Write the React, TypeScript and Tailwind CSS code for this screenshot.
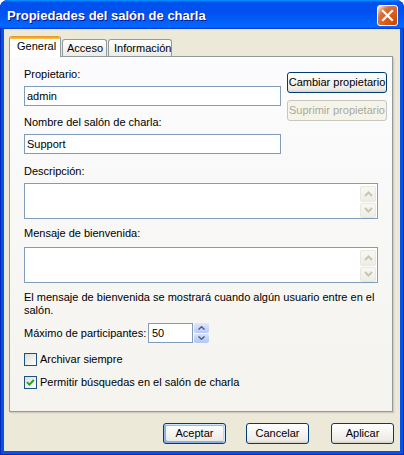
import React from "react";

const btnBase =
  "h-[21px] rounded-[3px] border flex items-center justify-center text-[11px] leading-[13px]";
const btnNormal =
  "border-[#003C74] bg-[linear-gradient(180deg,#ffffff,#ecebe5_86%,#d8d0c4)] text-black";
const btnDefault =
  "shadow-[inset_-1px_1px_#cee7ff,inset_1px_2px_#98b8ea,inset_-2px_2px_#bcd4f6,inset_1px_-1px_#89ade4,inset_2px_-2px_#89ade4]";
const btnDisabled = "border-[#C9C7BA] bg-[#F5F4EA] text-[#ACA899]";

function ScrollArrow({ up }: { up: boolean }) {
  return (
    <div className="w-[16px] h-[16px] rounded-[2px] border border-[#E9E7DD] bg-[linear-gradient(180deg,#f8f7f2,#eeede5)] flex items-center justify-center">
      <svg width="9" height="6" viewBox="0 0 9 6">
        <polyline
          points={up ? "1,5 4.5,1.5 8,5" : "1,1 4.5,4.5 8,1"}
          fill="none"
          stroke="#C9C5B5"
          strokeWidth="2"
        />
      </svg>
    </div>
  );
}

function TextArea() {
  return (
    <div className="mt-[5px] h-[36px] w-[354px] border border-[#7F9DB9] bg-white flex justify-end">
      <div className="flex flex-col gap-[1px] pt-[2px] pr-[1px]">
        <ScrollArrow up />
        <ScrollArrow up={false} />
      </div>
    </div>
  );
}

function Checkbox({ checked }: { checked: boolean }) {
  return (
    <div className="w-[13px] h-[13px] border border-[#1C5180] bg-[linear-gradient(135deg,#dcdcd7,#ffffff)] flex items-center justify-center">
      {checked && (
        <svg width="9" height="9" viewBox="0 0 9 9">
          <polyline
            points="1,4.2 3.4,6.6 7.8,2"
            fill="none"
            stroke="#21A121"
            strokeWidth="1.9"
          />
        </svg>
      )}
    </div>
  );
}

export default function App() {
  return (
    <div className="w-[404px] h-[455px] flex flex-col rounded-t-[8px] overflow-hidden bg-[#0553E6] shadow-[inset_1px_0_#0029B8,inset_-1px_0_#0029B8,inset_0_-1px_#0029B8] font-['Liberation_Sans',Arial,sans-serif] text-[11px] text-black">
      {/* Title bar */}
      <div className="h-[29px] shrink-0 flex items-center pl-[7px] pr-[6px] rounded-t-[8px] bg-[linear-gradient(180deg,#0997ff,#0053ee_8%,#0050ee_40%,#0066ff_88%,#0066ff_93%,#005bff_95%,#003dd7_96%,#003dd7)]">
        <span className="mt-[2px] text-white font-bold text-[13px] leading-[16px] [text-shadow:1px_1px_0_#0f1089]">
          Propiedades del salón de charla
        </span>
        <div className="ml-auto mt-[2px] w-[21px] h-[21px] rounded-[3px] border border-white bg-[radial-gradient(circle_at_90%_90%,#cc4600_0%,#dc6527_55%,#cd7546_70%,#ffccb2_90%,#ffffff_100%)] flex items-center justify-center">
          <svg width="13" height="13" viewBox="0 0 13 13">
            <path d="M2 2 L11 11 M11 2 L2 11" stroke="#ffffff" strokeWidth="2.2" strokeLinecap="square" />
          </svg>
        </div>
      </div>

      {/* Client area */}
      <div className="mx-[4px] mb-[4px] flex-1 bg-[#ECE9D8] pt-[7px] pl-[5px] pr-[6px] flex flex-col">
        {/* Tabs */}
        <div className="flex items-end h-[20px] relative z-10">
          <div className="w-[52px] h-[21px] -mb-px bg-white border-x border-[#919B9C] rounded-t-[3px] flex flex-col overflow-hidden">
            <div className="h-[3px] shrink-0 bg-[linear-gradient(180deg,#E68B2C,#FFC73C)]" />
            <div className="pl-[7px] pt-[1px] leading-[13px]">General</div>
          </div>
          <div className="ml-[1px] w-[45px] h-[17px] border border-b-0 border-[#919B9C] rounded-t-[3px] bg-[linear-gradient(180deg,#ffffff,#ecebe6)] pl-[4px] pt-[2px] leading-[13px]">
            Acceso
          </div>
          <div className="ml-[1px] w-[64px] h-[17px] border border-b-0 border-[#919B9C] rounded-t-[3px] bg-[linear-gradient(180deg,#ffffff,#ecebe6)] pl-[5px] pt-[2px] leading-[13px]">
            Información
          </div>
        </div>

        {/* Panel */}
        <div className="h-[356px] w-[384px] shrink-0 border border-[#919B9C] bg-[linear-gradient(180deg,#fcfcfe,#f4f3ee)] shadow-[1px_1px_0_#d0cebf,2px_2px_0_#e3e0d0] pt-[11px] pl-[14px] flex flex-col">
          <div className="flex">
            <div className="w-[257px] flex flex-col">
              <div className="leading-[13px]">Propietario:</div>
              <div className="mt-[5px] h-[20px] border border-[#7F9DB9] bg-white pl-[2px] flex items-center leading-[13px]">
                admin
              </div>
              <div className="mt-[10px] leading-[13px]">Nombre del salón de charla:</div>
              <div className="mt-[5px] h-[20px] border border-[#7F9DB9] bg-white pl-[2px] flex items-center leading-[13px]">
                Support
              </div>
            </div>
            <div className="ml-[6px] mt-[4px] flex flex-col gap-[7px]">
              <div className={`${btnBase} ${btnNormal} w-[100px]`}>Cambiar propietario</div>
              <div className={`${btnBase} ${btnDisabled} w-[100px]`}>Suprimir propietario</div>
            </div>
          </div>

          <div className="mt-[11px] leading-[13px]">Descripción:</div>
          <TextArea />

          <div className="mt-[8px] leading-[13px]">Mensaje de bienvenida:</div>
          <div className="mt-[2px]">
            <TextArea />
          </div>

          <div className="mt-[8px] leading-[13px]">
            El mensaje de bienvenida se mostrará cuando algún usuario entre en el
            <br />
            salón.
          </div>

          <div className="mt-[6px] h-[20px] flex items-center">
            <div className="w-[124px] leading-[13px]">Máximo de participantes:</div>
            <div className="w-[45px] h-[20px] border border-[#7F9DB9] bg-white pl-[3px] flex items-center leading-[13px]">
              50
            </div>
            <div className="ml-px w-[15px] h-[20px] flex flex-col gap-px">
              <div className="flex-1 rounded-[2px] bg-[linear-gradient(180deg,#dfe8fc,#b9cbf5)] flex items-center justify-center">
                <svg width="7" height="4" viewBox="0 0 7 4">
                  <polyline points="0.5,3.5 3.5,0.8 6.5,3.5" fill="none" stroke="#4D6185" strokeWidth="1.5" />
                </svg>
              </div>
              <div className="flex-1 rounded-[2px] bg-[linear-gradient(180deg,#d4e0fb,#b3c6f3)] flex items-center justify-center">
                <svg width="7" height="4" viewBox="0 0 7 4">
                  <polyline points="0.5,0.5 3.5,3.2 6.5,0.5" fill="none" stroke="#4D6185" strokeWidth="1.5" />
                </svg>
              </div>
            </div>
          </div>

          <div className="mt-[10px] flex items-center h-[13px]">
            <Checkbox checked={false} />
            <span className="ml-[3px] leading-[13px]">Archivar siempre</span>
          </div>
          <div className="mt-[10px] flex items-center h-[13px]">
            <Checkbox checked />
            <span className="ml-[3px] leading-[13px]">Permitir búsquedas en el salón de charla</span>
          </div>
        </div>

        {/* Bottom buttons */}
        <div className="mt-[11px] flex justify-end">
          <div className={`${btnBase} ${btnNormal} ${btnDefault} w-[63px]`}>Aceptar</div>
          <div className={`${btnBase} ${btnNormal} w-[63px] ml-[20px]`}>Cancelar</div>
          <div className={`${btnBase} ${btnNormal} w-[63px] ml-[22px]`}>Aplicar</div>
        </div>
      </div>
    </div>
  );
}
